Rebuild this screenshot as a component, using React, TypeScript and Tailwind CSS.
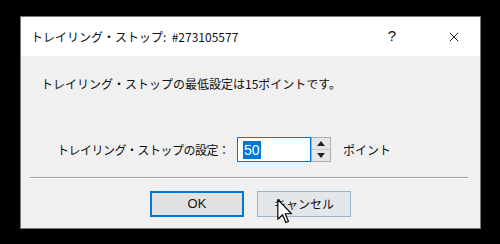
import { X } from "lucide-react";

const jp = "font-['Yu_Gothic_UI','Noto_Sans_CJK_JP',sans-serif]";

function Cursor() {
  return (
    <svg
      className="absolute left-[19px] top-[7px]"
      width="16"
      height="25"
      viewBox="0 0 13 21"
    >
      <path
        d="M0.5 0.5 L0.5 17 L4.5 13.2 L7.2 19.8 L9.4 18.9 L6.7 12.4 L12 12.4 Z"
        fill="white"
        stroke="black"
        strokeWidth="1"
        strokeLinejoin="round"
      />
    </svg>
  );
}

function Spinner() {
  return (
    <div className="flex flex-col w-[20px] h-[25px] border border-[#adadad] bg-[#f0f0f0]">
      <div className="flex-1 flex items-center justify-center border-b border-[#c8c8c8] bg-[#e6e6e6]">
        <svg width="8" height="5" viewBox="0 0 8 5">
          <path d="M0 5 L4 0 L8 5 Z" fill="#222" />
        </svg>
      </div>
      <div className="flex-1 flex items-center justify-center bg-[#e6e6e6]">
        <svg width="8" height="5" viewBox="0 0 8 5">
          <path d="M0 0 L4 5 L8 0 Z" fill="#222" />
        </svg>
      </div>
    </div>
  );
}

export default function App() {
  return (
    <div className={`w-[500px] h-[244px] bg-black pt-4 pl-[20px] ${jp}`}>
      <div className="w-[461px] h-[213px] border border-[#777] bg-white flex flex-col">
        <div className="h-[39px] flex items-center pl-[10px] pr-[18px] text-[12px] text-[#111]">
          <span className="flex-1">トレイリング・ストップ:&nbsp;&nbsp;#273105577</span>
          <span className="w-[12px] text-center text-[15px] font-['Liberation_Sans',sans-serif] mr-[48px]">?</span>
          <X size={16} strokeWidth={1.4} className="text-[#111]" />
        </div>
        <div className="flex-1 bg-[#f0f0f0] flex flex-col">
          <p className="mt-[20px] ml-[20px] text-[12px] leading-[16px] text-[#111]">
            トレイリング・ストップの最低設定は15ポイントです。
          </p>
          <div className="mt-[45px] ml-[36px] flex items-center text-[12px] text-[#111]">
            <span className="w-[180px] tracking-[-0.5px]">トレイリング・ストップの設定：</span>
            <div className="w-[74px] h-[25px] border border-[#0078d7] bg-white flex items-center pl-[5px]">
              <span className="bg-[#0078d7] text-white px-[1px] leading-[18px] text-[14px] font-['Liberation_Sans',sans-serif]">50</span>
            </div>
            <Spinner />
            <span className="ml-[12px]">ポイント</span>
          </div>
          <div className="mt-[15px] ml-[9px] mr-[12px] h-[2px] border-t border-[#a0a0a0] border-b border-b-white" />
          <div className="mt-[12px] flex justify-center gap-[13px] text-[12px] text-[#111]">
            <button className="w-[94px] h-[26px] border-2 border-[#0078d7] bg-[#e1e1e1] font-['Liberation_Sans',sans-serif] text-[13px]">
              OK
            </button>
            <button className="relative w-[94px] h-[26px] border border-[#9ab3cc] bg-[#e4e7ea]">
              キャンセル
              <Cursor />
            </button>
          </div>
        </div>
      </div>
    </div>
  );
}
